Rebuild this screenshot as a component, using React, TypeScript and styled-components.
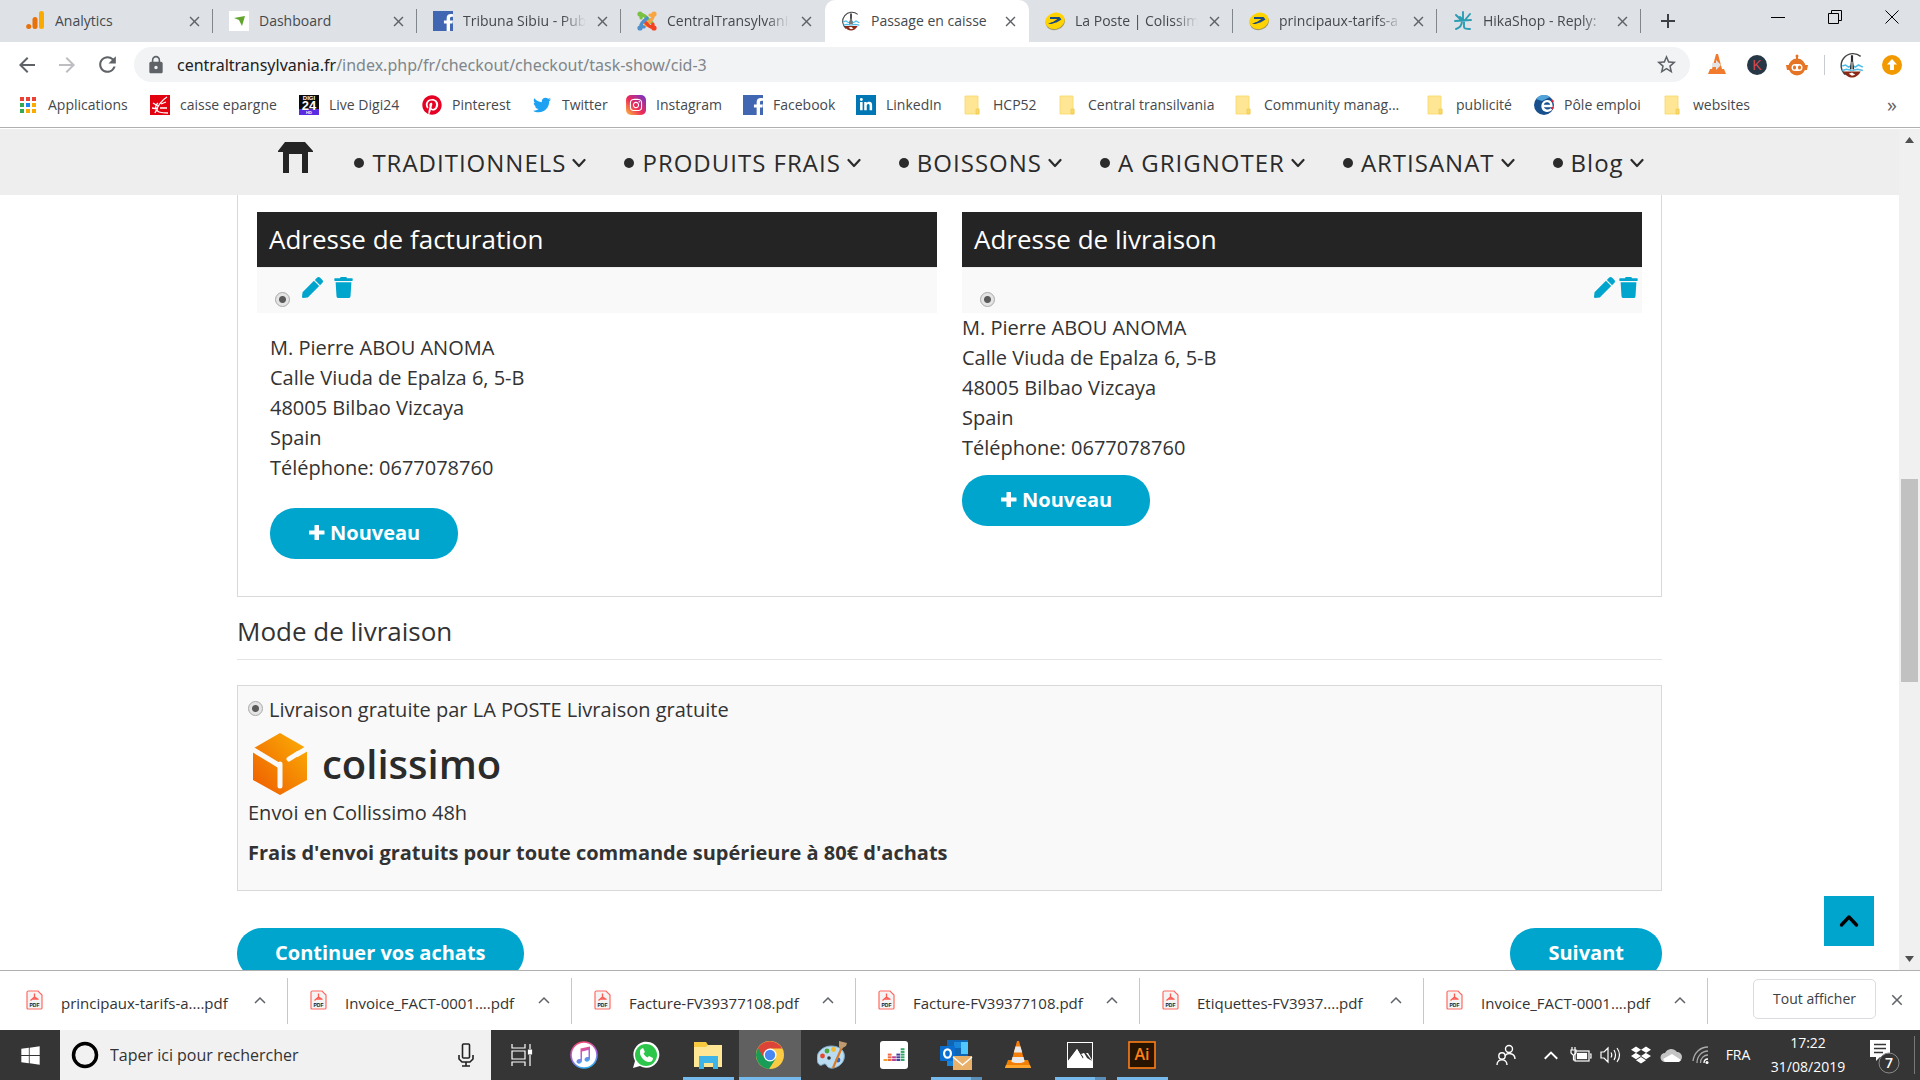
import React from 'react';
import styled, { createGlobalStyle, css } from 'styled-components';
import {
  FaPen,
  FaTrash,
  FaPinterest,
  FaTwitter,
  FaDropbox,
  FaInstagram,
  FaWindows,
  FaFacebookF,
  FaLinkedinIn,
} from 'react-icons/fa';
import { MdLock, MdStarBorder, MdRefresh, MdArrowBack, MdArrowForward, MdClose, MdAdd } from 'react-icons/md';

const ui = `'Open Sans', 'Noto Sans', sans-serif`;
const accent = '#00a5ce';

const GlobalStyle = createGlobalStyle`
  *, *::before, *::after { box-sizing: border-box; }
  body { margin: 0; font-family: ${ui}; color: #333; background: #fff; }
  button { font: inherit; color: inherit; border: 0; padding: 0; background: none; cursor: pointer; }
  a { color: inherit; text-decoration: none; }
  svg { display: block; flex: none; }
  h2, p { margin: 0; font-weight: 400; }
`;

const Screen = styled.div`
  display: flex;
  flex-direction: column;
  height: 100vh;
  min-height: 600px;
  overflow: hidden;
`;

/* ---------- Tab strip ---------- */

const TabStrip = styled.header`
  display: flex;
  align-items: stretch;
  height: 42px;
  flex: none;
  padding-left: 9px;
  background: #dee1e6;
`;

const Tab = styled.div<{ $active?: boolean; $line?: boolean }>`
  display: flex;
  align-items: center;
  flex: 0 1 204px;
  min-width: 0;
  padding: 0 10px 0 16px;
  background: linear-gradient(#80868b, #80868b) right center / ${(p) => (p.$line ? '1px 24px' : '0 0')} no-repeat;
  ${(p) =>
    p.$active &&
    css`
      background: #fff;
      border-radius: 10px 10px 0 0;
    `}
`;

const TabTitle = styled.a<{ $fade?: boolean }>`
  flex: 1;
  min-width: 0;
  margin: 0 4px 0 10px;
  overflow: hidden;
  white-space: nowrap;
  font-size: 14px;
  line-height: 20px;
  color: #45494d;
  mask-image: ${(p) => (p.$fade ? 'linear-gradient(to right, #000 calc(100% - 28px), transparent calc(100% - 4px))' : 'none')};
`;

const IconButton = styled.button<{ $w?: number; $color?: string }>`
  display: flex;
  align-items: center;
  justify-content: center;
  flex: none;
  width: ${(p) => p.$w ?? 40}px;
  color: ${(p) => p.$color ?? '#5f6368'};
`;

const WindowControls = styled.div`
  display: flex;
  margin-left: auto;
  padding-bottom: 8px;
`;

/* ---------- Toolbar ---------- */

const Toolbar = styled.div`
  display: flex;
  align-items: center;
  flex: none;
  height: 45px;
  padding: 0 8px 0 7px;
`;

const Omnibox = styled.div`
  display: flex;
  align-items: center;
  flex: 1;
  height: 35px;
  margin: 0 7px;
  padding: 0 4px 0 12px;
  border-radius: 18px;
  background: #f1f3f4;
`;

const Url = styled.a`
  flex: 1;
  margin-left: 11px;
  font-family: 'Noto Sans', sans-serif;
  font-size: 16px;
  line-height: 24px;
  color: #80868b;
  strong { font-weight: 400; color: #202124; }
`;

const Divider = styled.span`
  width: 1px;
  height: 20px;
  margin: 0 7px;
  background: #c8cbcf;
`;

const Bookmarks = styled.nav`
  display: flex;
  align-items: center;
  flex: none;
  height: 41px;
  padding: 0 8px 4px 18px;
  border-bottom: 1px solid #b0b0b0;
`;

const Bookmark = styled.a<{ $w: number }>`
  display: flex;
  align-items: center;
  gap: 10px;
  flex: 0 1 ${(p) => p.$w}px;
  white-space: nowrap;
  font-size: 14px;
  line-height: 20px;
  color: #45494d;
`;

const IconBox = styled.span<{ $bg?: string }>`
  display: flex;
  align-items: center;
  justify-content: center;
  flex: none;
  width: 20px;
  height: 20px;
  color: #fff;
  background: ${(p) => p.$bg ?? 'transparent'};
`;

const More = styled(IconButton)`
  margin-left: auto;
  font-size: 20px;
  line-height: 20px;
`;

/* ---------- Web page ---------- */

const Viewport = styled.div`
  display: flex;
  flex: 1;
  min-height: 0;
  margin-top: 1px;
`;

const Page = styled.main`
  position: relative;
  flex: 1;
  min-width: 0;
  overflow: hidden;
`;

const SiteNav = styled.nav`
  display: flex;
  align-items: center;
  justify-content: center;
  gap: 38px;
  height: 66px;
  padding: 0 0 0 23px;
  background: #eee;
  color: #2b2b2b;
`;

const NavItem = styled.a`
  display: flex;
  align-items: center;
  gap: 6px;
  white-space: nowrap;
  font-size: 24px;
  letter-spacing: 1px;
  line-height: 32px;
  padding-top: 2px;
`;

const Bullet = styled.span`
  width: 10px;
  height: 10px;
  border-radius: 50%;
  background: #2b2b2b;
  margin-right: 2px;
`;

const HomeLink = styled.a`
  margin: 0 2px 8px 0;
`;

const Content = styled.div`
  max-width: 1425px;
  margin: 0 auto;
`;

const AddressCard = styled.section`
  display: grid;
  grid-template-columns: 1fr 1fr;
  gap: 25px;
  padding: 17px 19px 37px;
  border: solid #d9d9d9;
  border-width: 0 1px 1px;
`;

const PanelTitle = styled.h2`
  padding: 10px 12px;
  font-size: 26px;
  line-height: 35px;
  color: #fff;
  background: #242424;
`;

const PanelTools = styled.div`
  display: flex;
  align-items: flex-start;
  height: 46px;
  padding: 9px 5px 0 17px;
  border-top: 1px solid #eee;
  background: #f9f9f9;
  color: ${accent};
`;

const Radio = styled.input`
  appearance: none;
  flex: none;
  width: 15px;
  height: 15px;
  margin: 0 0 3px;
  border: 1px solid #a8a8a8;
  border-radius: 50%;
  background: radial-gradient(circle, #5a5a5a 3px, #e4e4e4 4px);
`;

const PanelRadio = styled(Radio)`
  margin: 15px 12px 0 1px;
`;

const ToolGroup = styled.div<{ $end?: boolean }>`
  display: flex;
  gap: ${(p) => (p.$end ? 4 : 11)}px;
  margin-left: ${(p) => (p.$end ? 'auto' : '0')};
`;

const PanelBody = styled.div<{ $inset?: boolean }>`
  padding: ${(p) => (p.$inset ? '20px 13px 0' : '0')};
`;

const Address = styled.address<{ $gap: number }>`
  margin-bottom: ${(p) => p.$gap}px;
  font-style: normal;
  font-size: 20px;
  line-height: 30px;
`;

const Pill = styled.button`
  display: inline-flex;
  align-items: center;
  gap: 4px;
  height: 51px;
  padding: 0 38px 2px;
  border-radius: 25px;
  font-size: 20px;
  font-weight: 700;
  line-height: 30px;
  color: #fff;
  background: ${accent};
`;

const SectionTitle = styled.h2`
  margin: 16px 0 25px;
  padding-bottom: 10px;
  border-bottom: 1px solid #e4e4e4;
  font-size: 26px;
  line-height: 36px;
`;

const ShippingCard = styled.section`
  padding: 9px 10px 22px;
  border: 1px solid #d9d9d9;
  background: #f9f9f9;
  font-size: 20px;
  line-height: 30px;
`;

const ShippingOption = styled.label`
  display: flex;
  align-items: center;
  gap: 6px;
`;

const Logo = styled.svg`
  margin-top: 7px;
`;

const Fee = styled.p`
  margin-top: 10px;
  font-weight: 700;
`;

const Actions = styled.div`
  display: flex;
  justify-content: space-between;
  margin-top: 37px;
`;

const ToTop = styled.button`
  position: absolute;
  right: 25px;
  bottom: 24px;
  display: flex;
  align-items: center;
  justify-content: center;
  width: 50px;
  height: 50px;
  color: #000;
  background: ${accent};
`;

const ScrollTrack = styled.div`
  display: flex;
  flex-direction: column;
  align-items: center;
  justify-content: space-between;
  width: 21px;
  padding: 8px 0;
  background: #f0f0f0;
`;

const ScrollThumb = styled.div`
  width: 17px;
  height: 24.5%;
  margin-top: 62px;
  background: #c1c1c1;
`;

/* ---------- Downloads ---------- */

const Downloads = styled.div`
  display: flex;
  align-items: center;
  flex: none;
  height: 60px;
  padding-left: 4px;
  border-top: 1px solid #b0b0b0;
  background: #fff;
`;

const Download = styled.div`
  display: flex;
  align-items: center;
  flex: 0 1 284px;
  min-width: 0;
  height: 46px;
  padding: 0 19px 2px 22px;
  border-right: 1px solid #c8c8c8;
`;

const FileName = styled.a`
  flex: 1;
  margin: 6px 8px 0 18px;
  white-space: nowrap;
  font-size: 15px;
  line-height: 20px;
  color: #333;
`;

const ShowAll = styled.button`
  height: 40px;
  margin: 0 7px 4px auto;
  padding: 0 19px;
  border: 1px solid #dadce0;
  border-radius: 5px;
  font-size: 14px;
  font-weight: 500;
  color: #3c4043;
`;

const CloseBar = styled(IconButton)`
  margin: 0 9px 2px 0;
`;

/* ---------- Taskbar ---------- */

const Taskbar = styled.footer`
  display: flex;
  flex: none;
  height: 50px;
  background: #353535;
  color: #fff;
`;

const StartButton = styled(IconButton)`
  height: 50px;
`;

const Search = styled.label`
  display: flex;
  align-items: center;
  flex: 0 1 431px;
  padding: 0 17px 0 11px;
  background: #f1f1f1;
`;

const SearchInput = styled.input`
  flex: 1;
  min-width: 0;
  margin-left: 11px;
  padding: 0;
  border: 0;
  outline: 0;
  background: none;
  font: 16px/24px ${ui};
  &::placeholder { color: #333; opacity: 1; }
`;

const TaskButton = styled.button<{ $state?: 'open' | 'active' | 'multi' }>`
  display: flex;
  align-items: center;
  justify-content: center;
  flex: none;
  width: 62px;
  height: 50px;
  ${(p) =>
    p.$state === 'active' &&
    css`
      background: linear-gradient(#76b9ed, #76b9ed) bottom / 100% 3px no-repeat, #606060;
    `}
  ${(p) =>
    p.$state === 'open' &&
    css`
      background: linear-gradient(#76b9ed, #76b9ed) bottom / 51px 3px no-repeat;
    `}
  ${(p) =>
    p.$state === 'multi' &&
    css`
      background: linear-gradient(to right, #76b9ed 40px, #5b8fb8 40px) bottom / 51px 3px no-repeat;
    `}
`;

const Tray = styled.div`
  display: flex;
  align-items: center;
  margin-left: auto;
  padding-right: 5px;
  font-size: 14px;
  line-height: 24px;
`;

const Language = styled.span`
  width: 44px;
  text-align: center;
`;

const Clock = styled.time`
  display: flex;
  flex-direction: column;
  width: 96px;
  text-align: center;
`;

const Notice = styled.button`
  display: flex;
  justify-content: center;
  width: 59px;
  border-right: 1px solid #777;
`;

/* ---------- Drawings ---------- */

const AnalyticsIcon = () => (
  <svg width="18" height="20" viewBox="0 0 18 20">
    <rect x="13" y="0" width="5" height="18" rx="2.5" fill="#f9ab00" />
    <rect x="6.5" y="6" width="5" height="12" rx="2.5" fill="#e8710a" />
    <circle cx="2.7" cy="15.5" r="2.5" fill="#e8710a" />
  </svg>
);

const DashboardIcon = () => (
  <svg width="20" height="20">
    <rect width="20" height="20" fill="#fff" />
    <path d="M5 7l11-2-3 10-3-6z" fill="#62a52e" />
  </svg>
);

const FacebookIcon = () => (
  <IconBox $bg="#4267b2">
    <svg width="20" height="20">
      <g transform="translate(7 3)"><FaFacebookF size={17} color="#fff" /></g>
    </svg>
  </IconBox>
);

const JoomlaIcon = () => (
  <svg width="20" height="20" viewBox="0 0 20 20">
    <g fill="none" strokeWidth="3.2" strokeLinecap="round">
      <path d="M4 7v-1l2-2 2 1 7 7" stroke="#7ac143" />
      <path d="M13 4h1l2 2-1 2-7 7" stroke="#f9a541" />
      <path d="M16 13v1l-2 2-2-1-5-5" stroke="#f44321" />
      <path d="M7 16H6l-2-2 1-2 5-5" stroke="#5091cd" />
    </g>
    {[3, 17].map((x) => [3, 17].map((y) => (
      <circle key={`${x}${y}`} cx={x} cy={y} r="2.6" fill={x < 9 ? (y < 9 ? '#7ac143' : '#5091cd') : y < 9 ? '#f9a541' : '#f44321'} />
    )))}
  </svg>
);

const ShipIcon = ({ size = 20 }: { size?: number }) => (
  <svg width={size} height={size} viewBox="0 0 24 24">
    <circle cx="12" cy="12" r="11" fill="#fff" />
    <path d="M20 4A11 11 0 1 0 6 21" fill="none" stroke="#444" strokeWidth="1.3" />
    <path d="M3 13l3-1 3 2 3-2 3 2 3-2 4 2M3 17l4-1 5 1 5-1 5 1" fill="none" stroke="#4fbde8" strokeWidth="1.4" />
    <path d="M11 3h2v5l1 8h-4l1-8z" fill="#2b2b33" />
    <path d="M11.5 9h1v8h-1z" fill="#e8e2cf" />
    <path d="M4 18h16c-2 4-5 5.500-8 5.500S6 22 4 18z" fill="#8a2a16" />
    <path d="M9 20l3-1 3 2-3 1z" fill="#fff" />
  </svg>
);

const PosteIcon = () => (
  <svg width="20" height="20" viewBox="0 0 20 20">
    <ellipse cx="10" cy="11" rx="9.8" ry="8" fill="#a59a62" transform="rotate(-18 10 10)" />
    <ellipse cx="10" cy="9.8" rx="9.8" ry="8" fill="#ffd400" transform="rotate(-18 10 10)" />
    <path d="M5 6h9.500l2 2.500-5 3H7l5.500-3.500H5zM3 13l4-2h5.500l-6 2z" fill="#1c4a80" />
  </svg>
);

const HikaIcon = () => (
  <svg width="18" height="20" viewBox="0 0 18 20" fill="none" stroke="#2b9db3" strokeWidth="1.9" strokeLinecap="round">
    <path d="M9 1v8M2 4l5 5M16 3l-5 6M1 10l16-1M8 10c0 5-3 7-6 8M10 10v6c0 2 3 2 6 2M6 6l3 3" />
  </svg>
);

const AppsIcon = () => (
  <svg width="20" height="20" viewBox="0 0 20 20">
    {['#ea4335', '#ea4335', '#ea4335', '#34a853', '#1a86f0', '#f9ab00', '#34a853', '#f9ab00', '#f9ab00'].map((c, i) => (
      <rect key={i} x={2 + (i % 3) * 6} y={2 + Math.floor(i / 3) * 6} width="4" height="4" fill={c} />
    ))}
  </svg>
);

const CaisseIcon = () => (
  <svg width="20" height="20" viewBox="0 0 20 20">
    <rect width="20" height="20" fill="#e3000f" />
    <path d="M17 2C12 5 8 10 5 18M3 8l5 3M2 13l6 1M8 8C4 11 6 16 9 17s6 1 9 1M10 13h7M11 9l5-2" fill="none" stroke="#fff" strokeWidth="1.3" />
  </svg>
);

const DigiIcon = () => (
  <svg width="20" height="20" viewBox="0 0 20 20">
    <rect width="20" height="15" fill="#0a0a0f" />
    <rect y="14" width="20" height="6" fill="#5a2be0" />
    <g fill="#fff" fontFamily="Liberation Sans, sans-serif" fontWeight="700" textAnchor="middle">
      <text x="10" y="5" fontSize="6">DIGI</text>
      <text x="10" y="15" fontSize="13">24</text>
      <text x="10" y="19" fontSize="4">HD</text>
    </g>
  </svg>
);

const InstagramIcon = () => (
  <svg width="20" height="20" viewBox="0 0 20 20">
    <defs>
      <linearGradient id="insta" x1="0" y1="1" x2="1" y2="0">
        <stop offset="0" stopColor="#fdc040" />
        <stop offset="0.45" stopColor="#ee2a57" />
        <stop offset="1" stopColor="#6b35cf" />
      </linearGradient>
    </defs>
    <rect width="20" height="20" rx="5" fill="url(#insta)" />
    <g transform="translate(3 3)"><FaInstagram size={14} color="#fff" /></g>
  </svg>
);

const FolderIcon = () => (
  <svg width="20" height="20" viewBox="0 0 20 20">
    <path d="M2 1h13v13h1v5H2z" fill="#ffe694" stroke="#f8d866" strokeWidth="0.8" />
    <path d="M13 14h3v5h-3z" fill="#f8d866" stroke="#f0c850" strokeWidth="0.6" />
  </svg>
);

const PoleIcon = () => (
  <svg width="20" height="20" viewBox="0 0 20 20">
    <circle cx="10" cy="10" r="10" fill="#17508c" />
    <path d="M2 4a10 10 0 0 1 14-2l-8 4z" fill="#4fa3d8" />
    <path d="M9 11h8.500c0-7-9-6-9 0 0 5 6 6 9 3" fill="none" stroke="#fff" strokeWidth="2.4" />
    <path d="M18 5l1 2M18 14l1-2" stroke="#e2233a" strokeWidth="2" />
  </svg>
);

const ConeIcon = () => (
  <svg width="28" height="28" viewBox="0 0 28 28">
    <path d="M4 19h20l3 8H1z" fill="#f08000" />
    <path d="M1 27l1-3h24l1 3z" fill="#ffa52c" />
    <path d="M13 0h2l6 22c-3 2-11 2-14 0z" fill="#f57d0a" />
    <path d="M11.500 5.500h5l1.700 6H9.800zM8.500 16h11l1.200 4.500c-3 2-10.400 2-13.400 0z" fill="#e9e9e9" />
  </svg>
);

const MiniCone = () => (
  <svg width="18" height="21" viewBox="0 0 18 21">
    <path d="M8 0h2l4 15h2l2 5H0l2-5h2z" fill="#f27a2c" />
    <path d="M4 9h4V6l5 5-5 5v-3H4z" fill="#e4e4e4" />
  </svg>
);

const KIcon = () => (
  <svg width="20" height="20" viewBox="0 0 20 20">
    <circle cx="10" cy="10" r="10" fill="#263746" />
    <text x="10" y="15" fontSize="14" fontFamily="Liberation Sans, sans-serif" textAnchor="middle" fill="#d6484d">K</text>
  </svg>
);

const RobotIcon = () => (
  <svg width="22" height="22" viewBox="0 0 22 22">
    <circle cx="11" cy="2" r="1.5" fill="#e67425" />
    <path d="M10 2h2v4h-2zM0 11h3v5H1zM22 11h-3v5h2z" fill="#e67425" />
    <circle cx="11" cy="13" r="8.5" fill="#e67425" />
    <rect x="5.5" y="10" width="11" height="7" rx="3.5" fill="#fff" />
    <rect x="7" y="11.5" width="3" height="4" rx="1.5" fill="#e67425" />
    <rect x="12" y="11.5" width="3" height="4" rx="1.5" fill="#e67425" />
  </svg>
);

const UpdateIcon = () => (
  <svg width="20" height="20" viewBox="0 0 20 20">
    <circle cx="10" cy="10" r="10" fill="#f29900" />
    <path d="M10 4l5 5.500h-3V15H8V9.500H5z" fill="#fff" />
  </svg>
);

const HomeIcon = () => (
  <svg width="36" height="32" viewBox="0 0 36 32">
    <path d="M7 0h20l8 9v1h-5v21h-6V12H11v19H5V10H0V9z" fill="#242424" />
  </svg>
);

const PdfIcon = () => (
  <svg width="17" height="20" viewBox="0 0 17 20">
    <path d="M2.500 1H12l4 4v13q0 1-1 1H2q-1 0-1-1V2.500Q1 1 2.500 1z" fill="#f4f4f4" stroke="#ff6a62" strokeWidth="1.2" />
    <path d="M8.500 3.500v3.500l-4 3.500M8.500 7l4 2.500M6 9h5" fill="none" stroke="#ff5a52" strokeWidth="1.3" />
    <text x="8.500" y="16.500" fontSize="5" fontWeight="700" fontFamily="Liberation Sans, sans-serif" textAnchor="middle" fill="#222">PDF</text>
  </svg>
);

const Caret = ({ w = 12, color = '#5f6368' }: { w?: number; color?: string }) => (
  <svg width={w} height="10" viewBox="0 0 12 8" fill="none" stroke={color} strokeWidth="1.5">
    <path d="M1 7l5-5 5 5" />
  </svg>
);

const NavChevron = () => (
  <svg width="14" height="10" viewBox="0 0 14 10" fill="none" stroke="#2b2b2b" strokeWidth="2.2" strokeLinecap="round" strokeLinejoin="round">
    <path d="M1.500 2L7 8l5.500-6" />
  </svg>
);

const PlusIcon = () => (
  <svg width="18" height="18" viewBox="0 0 18 18">
    <path d="M1.500 6.500h5v-5q0-.5.5-.5h3.500q.5 0 .5.500v5h5q.5 0 .5.500v3q0 .5-.5.500h-5v5q0 .5-.5.500H7q-.5 0-.5-.5v-5h-5Q1 10.500 1 10V7q0-.5.500-.5z" fill="#fff" />
  </svg>
);

const ColissimoLogo = () => (
  <Logo width="260" height="66" viewBox="0 0 260 66" role="img" aria-label="colissimo">
    <defs>
      <linearGradient id="cube" x1="1" y1="0" x2="0" y2="1">
        <stop offset="0" stopColor="#fbb105" />
        <stop offset="1" stopColor="#ee5a00" />
      </linearGradient>
    </defs>
    <path d="M32 1L59 16.500V48L32 63 5 48V16.500z" fill="url(#cube)" />
    <path d="M4 17L32 34M60 16L48 23" fill="none" stroke="#f9f9f9" strokeWidth="5" />
    <path d="M32 32v22M41 27l8-5" fill="none" stroke="#f9f9f9" strokeWidth="5" strokeLinecap="round" />
    <text x="74" y="47" fontSize="40" fontWeight="600" fontFamily="Open Sans, sans-serif" fill="#2b2b2b">colissimo</text>
  </Logo>
);

const MicIcon = () => (
  <svg width="16" height="24" viewBox="0 0 16 24" fill="none" stroke="#222" strokeWidth="1.6">
    <rect x="4.5" y="1" width="7" height="14" rx="1" />
    <path d="M1 12v4l3 3h8l3-3v-4M8 19v4M4 23h8" />
  </svg>
);

const TaskViewIcon = () => (
  <svg width="22" height="24" viewBox="0 0 22 24" fill="none" stroke="#fff" strokeWidth="1.2">
    <path d="M1 1v4h13V1M1 23v-4h13v4M1 8h13v8H1zM19 1v5M19 12v11" />
    <path d="M17.500 7h3v4h-3z" fill="#fff" />
  </svg>
);

const MusicIcon = () => (
  <svg width="28" height="28" viewBox="0 0 28 28">
    <defs>
      <linearGradient id="note" x1="0.3" y1="0" x2="0.6" y2="1">
        <stop offset="0" stopColor="#fb4a72" />
        <stop offset="0.5" stopColor="#a95fdc" />
        <stop offset="1" stopColor="#2fb4f6" />
      </linearGradient>
    </defs>
    <circle cx="14" cy="14" r="13" fill="#fff" stroke="url(#note)" strokeWidth="1.6" />
    <path d="M10.500 7.500L20 5.500v12c0 4-5.500 4-5.500 1 0-2 2-2.500 4-2.500V9l-6.500 1.500v9c0 4-5.500 4-5.500 1 0-2 2-2.500 4-2.500z" fill="url(#note)" />
  </svg>
);

const WhatsappIcon = () => (
  <svg width="28" height="28" viewBox="0 0 28 28">
    <path d="M1 27l2-7A13 13 0 1 1 8 25z" fill="#fff" />
    <circle cx="14" cy="14" r="11" fill="#2cc64a" />
    <path d="M9 8l2-1 2 4-1.500 1.500c1 2 2.500 3 4 4L17 15l4 2c0 3-2 4-4 4-4 0-9-5-9-9 0-2 0-3 1-4z" fill="#fff" />
  </svg>
);

const ExplorerIcon = () => (
  <svg width="28" height="28" viewBox="0 0 28 28">
    <path d="M0 1h12l2 3h14v20H0z" fill="#f9c93f" />
    <path d="M0 6h12l2-2h14v22H0z" fill="#ffe694" />
    <path d="M5 15h19v13h-5v-6h-9v6H5z" fill="#3fb4e8" />
  </svg>
);

const ChromeIcon = () => (
  <svg width="28" height="28" viewBox="0 0 28 28">
    <circle cx="14" cy="14" r="14" fill="#fbcb43" />
    <path d="M14 14l5.500 4-6.500 10A14 14 0 0 1 1.900 7z" fill="#189d58" />
    <path d="M1.900 7A14 14 0 0 1 26.100 7.500H14L8 17z" fill="#db4437" />
    <circle cx="14" cy="14" r="6.5" fill="#fff" />
    <circle cx="14" cy="14" r="5.2" fill="#4687f4" />
  </svg>
);

const PaintIcon = () => (
  <svg width="30" height="28" viewBox="0 0 30 28">
    <path d="M14 5C6 5 0 11 0 17c0 6 3 8 5 7 3-2 4-1 5 1 3 5 15 1 17-7 2-8-4-13-13-13z" fill="#b9dcf2" stroke="#7fa9c6" />
    <circle cx="5.5" cy="15" r="2.4" fill="#e5482f" />
    <circle cx="10" cy="10" r="2.4" fill="#4aa53a" />
    <circle cx="16.5" cy="8.5" r="2.4" fill="#f4b92d" />
    <circle cx="21" cy="19" r="2.4" fill="#2f66c2" />
    <circle cx="12" cy="17" r="1.8" fill="#353535" />
    <path d="M25 6L16 27" stroke="#d97a25" strokeWidth="2.2" />
    <path d="M22 0l8 2-1 3-5 3-2-2z" fill="#c09a6c" />
  </svg>
);

const bars: [string, number][] = [['#f7a12d', 1], ['#ef6a43', 3], ['#c0408f', 2], ['#4a3f9c', 3], ['#35a56a', 5]];
const DeezerIcon = () => (
  <svg width="28" height="28" viewBox="0 0 28 28">
    <rect width="28" height="28" rx="3" fill="#fff" />
    {bars.map(([c, n], i) =>
      Array.from({ length: n }, (_, k) => <rect key={`${i}${k}`} x={3.5 + i * 4.3} y={18 - k * 2.7} width="3.8" height="2" fill={c} />),
    )}
  </svg>
);

const OutlookIcon = () => (
  <svg width="34" height="32" viewBox="0 0 34 32">
    <rect x="8" y="1" width="21" height="22" fill="#1066b5" />
    <path d="M15 3h14v6H15z" fill="#1a86d9" />
    <path d="M22 3h7v12h-7z" fill="#50c8ff" />
    <path d="M8 20h10v7H8z" fill="#1a86d9" />
    <rect x="1" y="7" width="15" height="15" rx="1" fill="#0a6ed0" />
    <ellipse cx="8.5" cy="14.5" rx="3.4" ry="4.2" fill="none" stroke="#fff" strokeWidth="2.2" />
    <rect x="14" y="17" width="19" height="14" fill="#e9b069" />
    <path d="M14 18l9.500 8L33 18" fill="none" stroke="#fff" strokeWidth="1.4" />
  </svg>
);

const PhotosIcon = () => (
  <svg width="28" height="28" viewBox="0 0 28 28">
    <rect x="1" y="1" width="26" height="26" fill="#fff" />
    <path d="M2 2h24v21l-4-5-4-6-3 1 5 6-3-1-6-10L2 20z" fill="#353535" />
    <path d="M2 20l9-12 6 10 1-6 4 0 4 7v4H2z" fill="#fff" />
    <path d="M17 10l3 2 6 8-5-3z" fill="#353535" />
  </svg>
);

const AiIcon = () => (
  <svg width="28" height="28" viewBox="0 0 28 28">
    <rect x="1" y="1" width="26" height="26" fill="#261300" stroke="#ff7f18" strokeWidth="1.6" />
    <text x="14" y="19" fontSize="16" fontWeight="600" fontFamily="Open Sans, sans-serif" textAnchor="middle" fill="#ff7f18">Ai</text>
  </svg>
);

const PeopleIcon = () => (
  <svg width="20" height="22" viewBox="0 0 20 22" fill="none" stroke="#fff" strokeWidth="1.4">
    <circle cx="13" cy="5" r="3.5" />
    <circle cx="6" cy="12" r="3.2" />
    <path d="M1 21c0-7 10-7 10 0M9 12c2-4 10-3 10 3" />
  </svg>
);

const BatteryIcon = () => (
  <svg width="22" height="18" viewBox="0 0 22 18" fill="none" stroke="#fff" strokeWidth="1.2">
    <rect x="5" y="5" width="14" height="10" />
    <path d="M20 8h1v4h-1M2 1v3M5 1v3M1 4h5v3l-2 2H3L1 7zM3.500 9v5h2" />
    <rect x="7.5" y="7.5" width="9" height="5" fill="#fff" />
  </svg>
);

const VolumeIcon = () => (
  <svg width="22" height="18" viewBox="0 0 22 18" fill="none" stroke="#fff" strokeWidth="1.2">
    <path d="M1 6h3l4-4v14l-4-4H1zM11 6.500q1.500 2.500 0 5M14 4q3 5 0 10M17 2q5 7 0 14" />
  </svg>
);

const CloudIcon = () => (
  <svg width="22" height="16" viewBox="0 0 22 16">
    <path d="M5 15a4.500 4.500 0 0 1 0-9 7 7 0 0 1 12-1 5 5 0 0 1 0 10z" fill="#c4c4c4" />
    <path d="M5 15l-2-3 9-5 9 6-2 2z" fill="#fff" />
  </svg>
);

const WifiIcon = () => (
  <svg width="18" height="20" viewBox="0 0 18 20" fill="none" stroke="#aaa" strokeWidth="1.3">
    <path d="M1 16C2 8 8 2 16 2M5 18C5 11 10 6 16 6M8.500 18c0-5 3.500-8 7.500-8" />
    <path d="M12 18c0-3 2-4 4-4" stroke="#fff" />
    <circle cx="15" cy="17.5" r="1.5" fill="#fff" stroke="none" />
  </svg>
);

const NoticeIcon = () => (
  <svg width="32" height="38" viewBox="0 0 32 38">
    <path d="M1 4h20v17H11l-4 4v-4H1z" fill="#fff" />
    <path d="M5 8.500h12M5 12.500h12M5 16.500h9" stroke="#353535" strokeWidth="1.4" />
    <circle cx="20" cy="27" r="10" fill="#353535" stroke="#8a8a8a" />
    <text x="20" y="32" fontSize="14" fontWeight="600" fontFamily="Open Sans, sans-serif" textAnchor="middle" fill="#fff">7</text>
  </svg>
);

/* ---------- Data ---------- */

const tabs = [
  { title: 'Analytics', icon: <AnalyticsIcon />, line: true },
  { title: 'Dashboard', icon: <DashboardIcon />, line: true },
  { title: 'Tribuna Sibiu - Pub', icon: <FacebookIcon />, line: true, fade: true },
  { title: 'CentralTransylvania', icon: <JoomlaIcon />, fade: true },
  { title: 'Passage en caisse', icon: <ShipIcon />, active: true },
  { title: 'La Poste | Colissim', icon: <PosteIcon />, line: true, fade: true },
  { title: 'principaux-tarifs-a', icon: <PosteIcon />, line: true, fade: true },
  { title: 'HikaShop - Reply: ', icon: <HikaIcon />, line: true, fade: true },
];

const bookmarks = [
  { label: 'Applications', w: 132, icon: <AppsIcon /> },
  { label: 'caisse epargne', w: 149, icon: <CaisseIcon /> },
  { label: 'Live Digi24', w: 123, icon: <DigiIcon /> },
  { label: 'Pinterest', w: 110, icon: <FaPinterest size={20} color="#e60023" /> },
  { label: 'Twitter', w: 94, icon: <FaTwitter size={18} color="#1da1f2" /> },
  { label: 'Instagram', w: 117, icon: <InstagramIcon /> },
  { label: 'Facebook', w: 113, icon: <FacebookIcon /> },
  { label: 'LinkedIn', w: 107, icon: <IconBox $bg="#0077b5"><FaLinkedinIn size={14} /></IconBox> },
  { label: 'HCP52', w: 95, icon: <FolderIcon /> },
  { label: 'Central transilvania', w: 176, icon: <FolderIcon /> },
  { label: 'Community manag...', w: 192, icon: <FolderIcon /> },
  { label: 'publicité', w: 108, icon: <FolderIcon /> },
  { label: 'Pôle emploi', w: 129, icon: <PoleIcon /> },
  { label: 'websites', w: 90, icon: <FolderIcon /> },
];

const menu = ['TRADITIONNELS', 'PRODUITS FRAIS', 'BOISSONS', 'A GRIGNOTER', 'ARTISANAT', 'Blog'];

const files = [
  'principaux-tarifs-a....pdf',
  'Invoice_FACT-0001....pdf',
  'Facture-FV39377108.pdf',
  'Facture-FV39377108.pdf',
  'Etiquettes-FV3937....pdf',
  'Invoice_FACT-0001....pdf',
];

const apps: { name: string; icon: React.ReactNode; state?: 'open' | 'active' | 'multi' }[] = [
  { name: 'Affichage des tâches', icon: <TaskViewIcon /> },
  { name: 'iTunes', icon: <MusicIcon /> },
  { name: 'WhatsApp', icon: <WhatsappIcon /> },
  { name: 'Explorateur', icon: <ExplorerIcon />, state: 'open' },
  { name: 'Chrome', icon: <ChromeIcon />, state: 'active' },
  { name: 'Paint', icon: <PaintIcon /> },
  { name: 'Deezer', icon: <DeezerIcon /> },
  { name: 'Outlook', icon: <OutlookIcon />, state: 'multi' },
  { name: 'VLC', icon: <ConeIcon /> },
  { name: 'Photos', icon: <PhotosIcon />, state: 'multi' },
  { name: 'Illustrator', icon: <AiIcon />, state: 'open' },
];

const addressLines = ['M. Pierre ABOU ANOMA', 'Calle Viuda de Epalza 6, 5-B', '48005 Bilbao Vizcaya', 'Spain', 'Téléphone: 0677078760'];

function AddressPanel({ title, name, inset }: { title: string; name: string; inset?: boolean }) {
  return (
    <div>
      <PanelTitle>{title}</PanelTitle>
      <PanelTools>
        <PanelRadio type="radio" name={name} aria-label={title} defaultChecked />
        <ToolGroup $end={!inset}>
          <IconButton $w={21} $color={accent} aria-label="Modifier"><FaPen size={21} /></IconButton>
          <IconButton $w={18} $color={accent} aria-label="Supprimer"><FaTrash size={21} /></IconButton>
        </ToolGroup>
      </PanelTools>
      <PanelBody $inset={inset}>
        <Address $gap={inset ? 25 : 12}>
          {addressLines.map((line) => <div key={line}>{line}</div>)}
        </Address>
        <Pill><PlusIcon />Nouveau</Pill>
      </PanelBody>
    </div>
  );
}

export default function App() {
  return (
    <Screen>
      <GlobalStyle />
      <TabStrip>
        {tabs.map((t) => (
          <Tab key={t.title} $active={t.active} $line={t.line}>
            <IconBox>{t.icon}</IconBox>
            <TabTitle href="#" $fade={t.fade}>{t.title}</TabTitle>
            <IconButton $w={17} aria-label="Fermer l'onglet"><MdClose size={17} /></IconButton>
          </Tab>
        ))}
        <IconButton $w={54} $color="#3c4043" aria-label="Nouvel onglet"><MdAdd size={24} /></IconButton>
        <WindowControls>
          <IconButton $w={57} $color="#000" aria-label="Réduire">
            <svg width="14" height="14"><path d="M0 7.500h14" stroke="#000" /></svg>
          </IconButton>
          <IconButton $w={57} $color="#000" aria-label="Restaurer">
            <svg width="14" height="14" fill="none" stroke="#000"><path d="M.5 3.500h10v10H.5zM3.500 3V.5h10v10H11" /></svg>
          </IconButton>
          <IconButton $w={57} $color="#000" aria-label="Fermer">
            <svg width="14" height="14" stroke="#000"><path d="M.5.5l13 13M13.500.5l-13 13" /></svg>
          </IconButton>
        </WindowControls>
      </TabStrip>

      <Toolbar>
        <IconButton aria-label="Retour"><MdArrowBack size={24} /></IconButton>
        <IconButton $color="#bcbec1" aria-label="Avancer"><MdArrowForward size={24} /></IconButton>
        <IconButton aria-label="Actualiser"><MdRefresh size={25} /></IconButton>
        <Omnibox>
          <MdLock size={20} color="#5f6368" />
          <Url href="#"><strong>centraltransylvania.fr</strong>/index.php/fr/checkout/checkout/task-show/cid-3</Url>
          <IconButton aria-label="Favori"><MdStarBorder size={23} /></IconButton>
        </Omnibox>
        <IconButton aria-label="Extension cône"><MiniCone /></IconButton>
        <IconButton aria-label="Extension K"><KIcon /></IconButton>
        <IconButton aria-label="Extension robot"><RobotIcon /></IconButton>
        <Divider />
        <IconButton aria-label="Profil"><ShipIcon size={26} /></IconButton>
        <IconButton aria-label="Mise à jour"><UpdateIcon /></IconButton>
      </Toolbar>

      <Bookmarks>
        {bookmarks.map((b) => (
          <Bookmark key={b.label} href="#" $w={b.w}>
            <IconBox>{b.icon}</IconBox>
            {b.label}
          </Bookmark>
        ))}
        <More aria-label="Autres favoris">»</More>
      </Bookmarks>

      <Viewport>
        <Page>
          <SiteNav>
            <HomeLink href="#" aria-label="Accueil"><HomeIcon /></HomeLink>
            {menu.map((m) => (
              <NavItem key={m} href="#">
                <Bullet />
                {m}
                <NavChevron />
              </NavItem>
            ))}
          </SiteNav>
          <Content>
            <AddressCard>
              <AddressPanel title="Adresse de facturation" name="billing" inset />
              <AddressPanel title="Adresse de livraison" name="delivery" />
            </AddressCard>
            <SectionTitle>Mode de livraison</SectionTitle>
            <ShippingCard>
              <ShippingOption>
                <Radio type="radio" name="shipping" defaultChecked />
                Livraison gratuite par LA POSTE Livraison gratuite
              </ShippingOption>
              <ColissimoLogo />
              <p>Envoi en Collissimo 48h</p>
              <Fee>Frais d'envoi gratuits pour toute commande supérieure à 80€ d'achats</Fee>
            </ShippingCard>
            <Actions>
              <Pill>Continuer vos achats</Pill>
              <Pill>Suivant</Pill>
            </Actions>
          </Content>
          <ToTop aria-label="Haut de page">
            <svg width="20" height="14" viewBox="0 0 20 14" fill="none" stroke="#000" strokeWidth="3.4" strokeLinecap="round" strokeLinejoin="round">
              <path d="M2.500 11L10 3l7.500 8" />
            </svg>
          </ToTop>
        </Page>
        <ScrollTrack>
          <svg width="9" height="6"><path d="M0 6l4.500-6L9 6z" fill="#505050" /></svg>
          <ScrollThumb />
          <svg width="9" height="6"><path d="M0 0l4.500 6L9 0z" fill="#505050" /></svg>
        </ScrollTrack>
      </Viewport>

      <Downloads>
        {files.map((f, i) => (
          <Download key={i}>
            <PdfIcon />
            <FileName href="#">{f}</FileName>
            <IconButton $w={16} aria-label="Options"><Caret /></IconButton>
          </Download>
        ))}
        <ShowAll>Tout afficher</ShowAll>
        <CloseBar $w={28} aria-label="Fermer la barre"><MdClose size={18} /></CloseBar>
      </Downloads>

      <Taskbar>
        <StartButton $w={60} $color="#fff" aria-label="Démarrer"><FaWindows size={21} /></StartButton>
        <Search>
          <svg width="28" height="28"><circle cx="14" cy="14" r="11.5" fill="none" stroke="#000" strokeWidth="3.5" /></svg>
          <SearchInput placeholder="Taper ici pour rechercher" aria-label="Rechercher" />
          <MicIcon />
        </Search>
        {apps.map((a) => (
          <TaskButton key={a.name} $state={a.state} aria-label={a.name}>{a.icon}</TaskButton>
        ))}
        <Tray>
          <IconButton $w={60} $color="#fff" aria-label="Contacts"><PeopleIcon /></IconButton>
          <IconButton $w={30} $color="#fff" aria-label="Icônes cachées"><Caret w={16} color="#fff" /></IconButton>
          <IconButton $w={30} $color="#fff" aria-label="Batterie"><BatteryIcon /></IconButton>
          <IconButton $w={30} $color="#fff" aria-label="Volume"><VolumeIcon /></IconButton>
          <IconButton $w={30} $color="#fff" aria-label="Dropbox"><FaDropbox size={20} /></IconButton>
          <IconButton $w={30} $color="#fff" aria-label="OneDrive"><CloudIcon /></IconButton>
          <IconButton $w={30} $color="#fff" aria-label="Réseau"><WifiIcon /></IconButton>
          <Language>FRA</Language>
          <Clock><span>17:22</span><span>31/08/2019</span></Clock>
          <Notice aria-label="Notifications"><NoticeIcon /></Notice>
        </Tray>
      </Taskbar>
    </Screen>
  );
}
